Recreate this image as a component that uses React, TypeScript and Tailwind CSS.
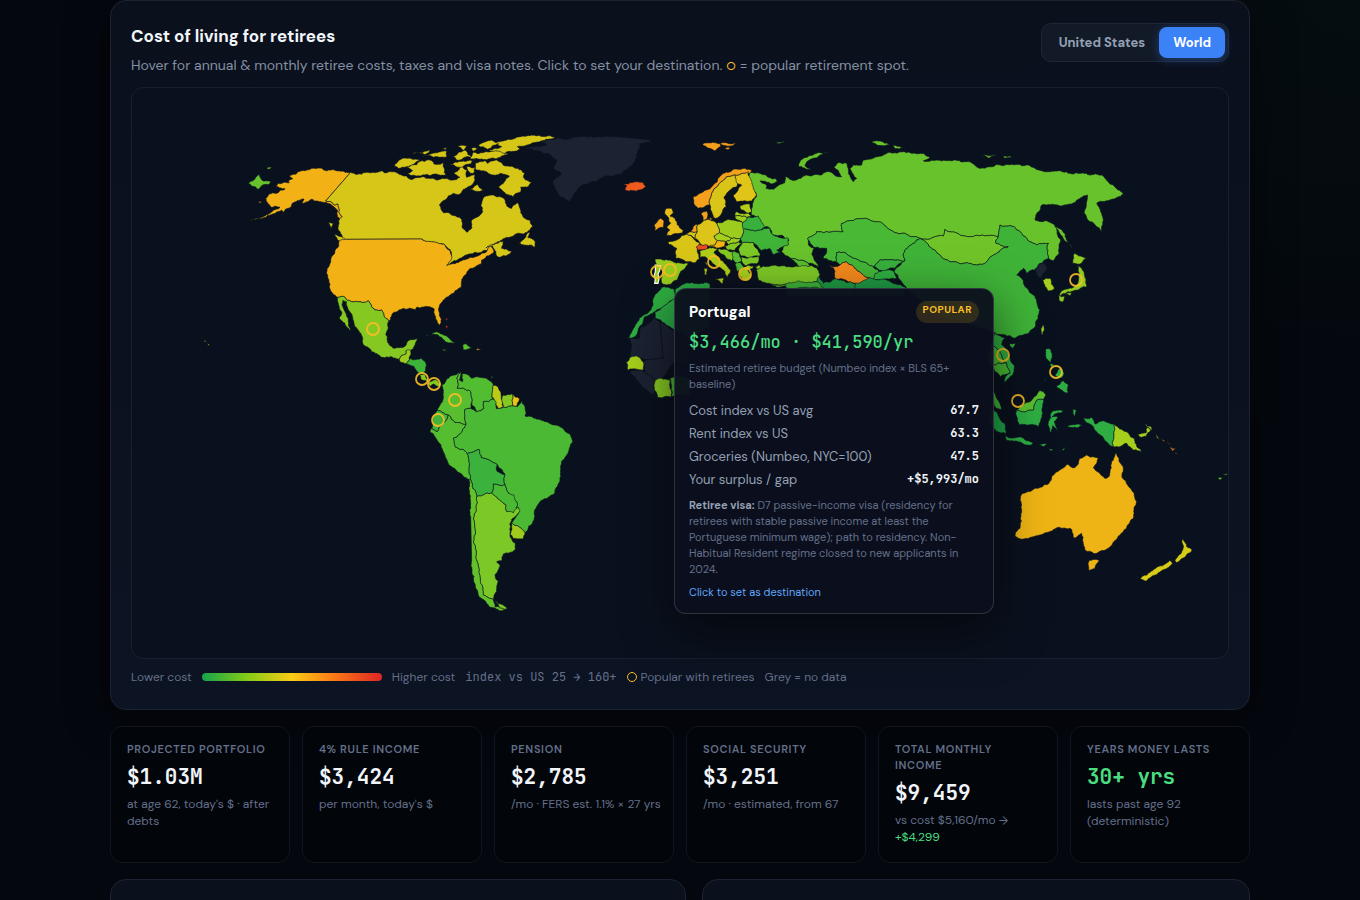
type Land = [fill: string, d: string];

type Region = {
  x: number;
  y: number;
  lands: Land[];
};

const NO_DATA = "#1b2232";

// Outlines are stored at three units per map pixel, relative to the region's origin.
const regions: Region[] = [
  {
    x: 98,
    y: 32,
    lands: [
      ["#f2b215", "175,182 188,176 178,168 195,163 205,155 225,152 240,148 275,144 282,150 300,150 330,153 362,157 287,243 305,246 312,255 323,251 330,282 337,290 330,298 322,290 322,270 305,255 287,247 262,243 245,238 215,250 222,237 190,248 182,262 160,276 155,270 120,285 58,301 110,284 150,262 125,262 113,250 107,235 118,222 140,220 165,206 138,200 145,190 178,188"],
      ["#d6c617", "362,157 375,162 395,163 400,158 430,157 455,152 470,158 500,158 530,168 540,178 580,170 615,178 650,175 668,180 690,172 672,160 695,138 712,150 710,172 735,165 735,180 725,195 700,208 690,222 670,220 645,240 628,255 640,278 680,290 695,298 698,325 712,337 725,325 725,300 750,285 758,275 752,255 768,228 790,225 825,240 830,258 845,265 862,248 872,278 880,292 900,300 908,318 900,330 880,342 830,352 800,368 768,384 800,370 820,363 815,385 845,395 852,393 810,412 800,408 798,395 788,378 770,392 750,398 720,402 690,415 668,425 650,437 665,405 660,388 640,372 600,365 575,357 348,358 340,360 325,320 330,295 337,290 330,282 323,251 312,255 305,246 287,243"],
      ["#d6c617", "868,370 900,336 893,352 915,363 914,382 905,375 880,374"],
      ["#d6c617", "313,342 335,350 348,362 345,374 322,358"],
      ["#d6c617", "296,307 310,310 303,326"],
      ["#d6c617", "737,128 765,122 772,130 800,120 826,138 862,145 884,160 880,172 905,186 890,202 872,202 872,216 850,230 826,220 806,200 822,187 838,168 812,160 785,164 760,152 738,150"],
      ["#d6c617", "786,68 830,60 870,50 900,47 975,51 905,70 862,80 870,86 840,94 820,102 776,92 815,80"],
      ["#d6c617", "744,77 785,60 806,72 772,88"],
      ["#d6c617", "533,160 548,152 528,142 560,134 565,126 600,120 612,132 640,128 647,166 618,162 600,167 560,168"],
      ["#d6c617", "493,138 520,114 570,120 535,140 505,145"],
      ["#d6c617", "548,101 600,90 588,103"],
      ["#d6c617", "576,107 650,94 650,111 610,112"],
      ["#d6c617", "683,79 713,76 700,91"],
      ["#d6c617", "670,108 688,96 706,90 724,112 680,120"],
      ["#d6c617", "728,98 790,94 834,102 800,116 720,116"],
      ["#d6c617", "660,134 690,124 740,116 722,132 690,142"],
      ["#d6c617", "710,140 736,142 732,158 722,160"],
      ["#d6c617", "724,84 744,86 730,94"],
      ["#d6c617", "716,209 732,200 742,192 760,213 735,214"],
      ["#d6c617", "636,84 653,80 645,89"],
      ["#68c22b", "55,190 72,180 88,163 98,182 122,185 115,194 95,197 85,208 75,200"],
      ["#68c22b", "110,146 125,141 120,147"],
      ["#f2b215", "84,246 96,244 92,250"],
    ],
  },
  {
    x: 168,
    y: 142,
    lands: [
      ["#f2b215", "118,31 135,28 365,27 400,36 430,42 450,62 455,78 440,106 470,98 510,82 545,70 560,65 572,48 582,66 560,78 545,90 543,103 512,115 500,130 490,140 484,172 460,190 430,210 418,230 424,268 418,286 408,268 402,236 385,230 350,232 345,240 310,235 280,248 266,275 255,262 245,240 225,240 205,212 155,215 135,202 112,202 92,183 84,145 82,115 100,75 115,50"],
      ["#86c822", "112,202 135,202 155,215 205,212 225,240 245,240 255,262 266,275 258,310 262,335 280,355 310,352 325,332 352,325 345,345 330,362 318,362 318,372 303,378 298,390 275,380 245,382 215,365 190,345 188,325 165,290 150,245 140,215 128,212 130,235 145,270 153,305 135,280 118,262 125,245"],
      ["#9ccd1e", "318,362 333,360 330,378 320,402 300,395 298,390 303,378 318,372"],
      ["#3db33a", "330,385 365,385 376,395 372,430 355,430 340,408 320,402"],
      ["#86c822", "355,432 372,432 385,455 365,450"],
      ["#86c822", "385,458 410,450 425,462 415,470 400,462 390,470"],
      ["#5abf2e", "377,318 410,305 440,318 466,338 440,337 425,322 400,312"],
      ["#5abf2e", "488,345 500,342 517,355 490,359"],
      ["#86c822", "427,357 443,359 432,363"],
      ["#e09a1c", "529,356 543,358 530,361"],
      ["#d83a22", "437,285 444,290 439,298"],
      ["#d83a22", "434,266 444,266 440,271"],
      ["#f2b215", "-278,340 -271,343 -276,348"],
      ["#f2b215", "-288,330 -280,334 -285,336"],
    ],
  },
  {
    x: 248,
    y: 242,
    lands: [
      ["#58be2f", "185,165 200,148 225,135 242,124 230,145 232,175 270,182 277,210 272,235 255,238 258,285 240,278 225,278 205,255 172,240 188,215 190,180"],
      ["#52bd31", "242,124 238,150 248,155 246,132 265,135 275,145 320,145 340,165 335,200 342,208 310,215 312,235 290,245 275,225 277,210 270,182 232,175 230,145"],
      ["#bccc16", "340,165 352,168 362,185 368,215 370,232 355,238 345,215 335,200"],
      ["#86c822", "370,195 398,192 400,228 370,232 366,212"],
      ["#e8c515", "398,192 418,205 410,230 400,228"],
      ["#58be2f", "333,140 339,140 336,146"],
      ["#3eb43a", "172,240 205,255 195,275 178,290 172,305 155,295 160,260"],
      ["#55bd30", "205,255 225,278 240,278 258,285 248,298 220,325 225,350 250,358 262,372 268,410 272,450 265,448 215,410 190,365 150,305 155,295 172,305 178,290 195,275"],
      ["#4cb934", "272,235 290,245 312,235 310,215 342,208 348,235 370,232 400,228 412,230 425,212 437,245 435,258 465,265 500,275 540,290 570,312 578,335 560,375 543,405 540,450 525,490 480,515 468,535 462,570 435,608 395,578 418,545 410,515 385,490 375,465 375,435 350,402 303,382 297,358 262,372 250,358 225,350 220,325 248,298 258,285 255,238"],
      ["#3bb23c", "262,372 297,358 303,382 350,402 352,425 375,435 375,465 340,462 335,490 318,490 290,500 272,450 268,410"],
      ["#4cb934", "340,462 375,465 385,490 402,495 412,520 410,545 380,545 378,525 335,490"],
      ["#9fcc1c", "395,578 435,608 428,627 400,625 390,612"],
      ["#7cc826", "290,500 318,490 335,490 378,525 380,545 400,548 416,532 420,542 390,580 390,618 405,640 405,660 370,672 365,692 350,695 360,705 345,735 355,755 350,785 340,808 310,795 300,740 290,690 285,600 282,560"],
      ["#65c12b", "265,448 272,450 290,500 282,560 285,600 290,690 300,740 310,795 340,808 345,830 375,838 360,843 330,832 295,795 282,740 275,690 272,560 268,490"],
      ["#7cc826", "345,812 386,838 358,834"],
      [NO_DATA, "415,805 424,803 420,808"],
    ],
  },
  {
    x: 608,
    y: 42,
    lands: [
      ["#68c22b", "28,130 60,130 105,145 112,155 95,162 60,153 80,165 78,175 100,178 112,168 135,158 135,140 155,150 190,138 245,135 260,125 305,140 282,112 295,98 320,100 325,130 340,155 350,145 330,115 340,105 365,105 370,90 410,80 440,70 480,65 550,70 570,82 550,92 620,92 680,95 720,115 750,110 770,103 830,103 880,112 925,125 1010,128 1085,135 1125,172 1150,192 1115,208 1070,220 1088,260 1085,305 1050,275 1032,250 1040,215 1042,195 1020,205 990,222 905,225 885,270 925,275 945,285 962,330 958,370 940,392 925,385 925,340 890,345 860,325 820,290 780,285 775,320 700,320 615,298 610,318 540,325 460,305 425,278 375,265 305,280 310,305 230,305 203,325 205,345 222,355 215,372 235,410 205,400 150,385 125,365 130,350 147,330 130,318 95,310 90,295 70,290 55,262 35,255 35,235 40,215 50,195 35,165 25,140"],
      ["#68c22b", "175,108 190,85 230,70 267,67 205,92 195,108 212,118"],
      ["#68c22b", "393,38 415,33 452,46 410,45"],
      ["#68c22b", "458,47 490,52 465,56"],
      ["#68c22b", "723,74 777,75 745,84"],
      ["#68c22b", "790,79 816,80 795,85"],
      ["#68c22b", "108,37 134,35 118,41"],
      ["#68c22b", "943,282 967,300 995,350 998,358 968,320"],
      ["#49b935", "203,325 230,305 310,305 305,280 375,265 425,278 460,305 540,325 505,350 490,372 495,392 420,390 400,410 355,390 320,372 290,368 288,395 250,385 260,355 222,352"],
      ["#44b638", "288,395 290,368 320,372 355,390 400,410 430,430 400,450 390,445 350,420 320,396 300,405"],
      ["#f58a1c", "268,405 285,410 300,405 320,396 350,420 390,445 370,473 345,460 285,445 285,425"],
      ["#38b13c", "400,410 420,390 495,392 465,415 430,425"],
      ["#2fae40", "405,430 440,420 462,425 470,445 430,450 400,446"],
      ["#58be2f", "150,385 205,400 225,430 205,430 170,400"],
      ["#1f9a44", "200,430 235,435 250,460 290,447 345,460 370,473 370,500 140,500 135,462 190,455"],
      ["#1f9a44", "345,460 400,446 440,450 500,475 490,500 345,500"],
      ["#70c429", "540,325 610,318 615,298 700,320 775,320 768,340 805,350 760,375 740,395 710,405 630,395 575,355"],
      ["#3fb338", "540,325 575,355 630,395 710,405 740,395 760,375 805,350 768,340 775,320 780,285 820,290 860,325 890,345 925,340 925,385 900,400 885,420 860,430 850,415 830,435 850,452 855,470 885,500 900,540 885,590 860,612 825,625 795,615 760,605 600,560 500,475 462,425 495,392 490,372 505,350"],
      [NO_DATA, "885,420 900,400 915,402 920,420 905,445 890,435"],
      ["#a5cf1c", "908,450 930,445 943,475 925,483 915,470"],
      ["#8fcb20", "1002,370 1040,385 1020,402 998,400"],
      ["#8fcb20", "1013,408 1032,425 1040,470 1015,480 985,485 958,500 962,487 1000,472 1015,450"],
      ["#8fcb20", "956,496 975,500 970,516 958,512"],
      ["#8fcb20", "978,492 997,486 990,497"],
    ],
  },
  {
    x: 488,
    y: 42,
    lands: [
      ["#f05a1c", "8,160 25,162 45,155 70,157 78,170 60,180 38,182 15,178 20,168"],
      ["#f5a01a", "248,43 300,40 303,48 285,63 270,55"],
      ["#f5a01a", "301,40 347,38 340,46 305,44"],
      ["#f5a01a", "314,54 331,54 325,60"],
      ["#f5a01a", "220,200 250,185 280,165 310,130 345,117 375,115 395,122 388,130 370,130 345,135 320,140 295,165 275,190 270,225 235,235 222,222"],
      ["#d8c518", "270,225 275,190 295,165 320,140 345,135 350,150 350,170 330,180 312,205 318,230 305,250 292,265 280,262 272,240"],
      ["#e0c417", "345,135 370,130 385,125 390,145 400,170 410,195 395,213 350,215 340,195 365,165 352,160"],
      ["#b4cc18", "360,228 390,222 395,245 385,250 365,240"],
      ["#a5cf1c", "348,245 385,250 395,258 380,262 345,258"],
      ["#9ccd1e", "345,258 380,262 382,274 368,278 348,268"],
      ["#f5a01a", "243,252 260,243 262,265 250,272"],
      ["#f5a01a", "268,262 279,265 270,273"],
      ["#e8bd18", "137,237 155,235 160,250 150,258 165,265 172,285 190,300 185,310 160,312 140,317 150,300 140,290 152,280 145,262 135,252"],
      ["#f2a51a", "103,286 122,265 132,272 130,292 105,302"],
      ["#d8c518", "143,338 170,330 200,312 225,330 240,340 232,365 238,385 225,398 200,395 168,385 170,355"],
      ["#d8c518", "200,312 212,305 232,305 225,326"],
      ["#f2a51a", "212,305 220,290 235,283 232,305"],
      ["#dcc418", "235,283 250,272 262,268 290,280 298,308 282,318 292,332 285,345 245,348 240,340 225,326 232,305"],
      ["#ee4a22", "228,352 240,343 262,345 262,356 235,361"],
      ["#f5b312", "262,348 285,345 292,332 318,335 315,350 290,355"],
      ["#9ccd1e", "290,280 340,270 368,278 370,310 362,326 335,325 298,308"],
      ["#a5cf1c", "282,318 298,308 335,325 318,335 292,332"],
      ["#9ccd1e", "318,335 335,325 362,326 355,336 325,344"],
      ["#86c822", "315,348 325,344 355,336 365,340 345,362 320,358"],
      ["#b0cd18", "238,364 262,356 292,355 282,366 300,390 332,420 322,442 315,425 295,410 270,390 255,380 240,382"],
      ["#b0cd18", "286,447 311,444 308,461"],
      ["#b0cd18", "252,415 262,415 260,434 253,434"],
      ["#c0cc18", "254,395 261,398 258,411"],
      ["#86c822", "292,358 318,358 345,366 335,392 315,378 300,368"],
      ["#58be2f", "340,364 358,370 365,395 352,402 338,388"],
      ["#49b935", "345,402 362,398 372,412 352,424"],
      ["#7cc826", "355,360 365,340 400,338 415,362 420,378 385,384 362,378"],
      ["#7cc826", "362,380 385,384 418,378 410,402 375,408 366,396"],
      ["#a5cf1c", "355,424 375,410 402,408 398,416 384,420 395,436 385,452 368,450"],
      ["#38b13c", "370,298 368,278 385,260 415,258 435,290 425,300"],
      ["#3fb338", "362,326 370,310 370,298 425,300 450,295 460,315 505,325 505,345 470,360 480,368 462,374 450,356 425,362 410,345 400,338 365,340"],
      ["#98cc1e", "105,388 150,390 205,400 195,415 178,432 172,450 140,465 125,458 126,412 108,405"],
      ["#7cc826", "408,420 430,408 465,405 510,410 560,408 590,412 600,435 590,455 520,462 475,465 440,460 415,450"],
      ["#86c822", "404,410 418,404 424,412 412,418"],
      ["#58be2f", "455,462 500,462 496,468 460,468"],
      ["#3fb338", "495,463 545,456 590,455 610,475 500,475"],
    ],
  },
  {
    x: 388,
    y: 37,
    lands: [
      [NO_DATA, "15,70 80,62 60,50 110,40 200,36 280,34 395,45 360,55 350,90 340,115 320,135 290,148 240,160 205,175 180,185 160,210 150,230 120,215 103,190 100,165 125,145 100,130 110,105 90,90"],
      ["#2fae40", "425,487 462,492 465,520 430,545 405,560 375,575 365,600 345,635 325,640 340,610 370,570 392,555 400,520"],
      ["#2ba845", "465,495 475,488 500,474 558,472 570,478 570,600 510,640 462,617 405,578 405,560 465,520"],
      [NO_DATA, "330,640 358,640 365,605 405,578 420,590 430,700 375,705 350,692 330,700"],
      [NO_DATA, "420,590 462,617 510,640 510,720 462,712 440,745 425,765 405,765 375,740 370,712 375,705 430,700"],
      ["#a5cf1c", "318,712 330,697 350,692 370,712 370,735 325,735"],
      [NO_DATA, "330,737 375,740 405,765 405,815 385,800 360,775 345,755"],
      ["#86c822", "405,765 425,760 450,765 455,815 412,818 403,795"],
      ["#49b935", "450,760 470,752 510,760 510,810 455,815"],
    ],
  },
  {
    x: 848,
    y: 142,
    lands: [
      ["#8fcb20", "183,295 192,285 193,300 187,315"],
      ["#3fb338", "88,342 106,340 100,357"],
      ["#2eae42", "42,305 75,325 65,345 85,370 102,405 100,430 70,458 75,440 90,430 80,400 55,360 30,345"],
      ["#49b935", "30,345 55,360 80,400 30,405"],
      ["#49b935", "30,405 80,400 90,430 60,440 45,425"],
      ["#3fb338", "35,485 45,490 60,520 62,540 42,525"],
      ["#1fa548", "30,535 42,542 75,580 78,612 60,608 30,585"],
      ["#2eae42", "76,617 100,624 125,622 160,638 150,646 95,632 80,630"],
      ["#2eae42", "175,645 201,643 190,651"],
      ["#2eae42", "203,654 220,658 212,663"],
      ["#2eae42", "237,663 257,649 250,661"],
      ["#2eae42", "108,540 125,545 160,540 170,510 190,508 188,550 175,590 120,585 110,560"],
      ["#5abf2e", "108,540 130,525 155,510 180,480 198,495 190,508 170,510 160,540 125,545"],
      ["#2eae42", "205,575 215,545 257,542 225,552 215,562 234,562 222,575 235,607 218,587 210,612"],
      ["#2eae42", "278,538 289,540 284,560"],
      ["#2eae42", "262,588 308,585 290,593"],
      ["#2eae42", "197,358 213,358 215,385 210,398 198,385"],
      ["#2eae42", "206,403 224,403 216,413"],
      ["#2eae42", "240,415 253,430 246,443 225,436"],
      ["#2eae42", "228,470 250,452 265,465 262,490 245,480"],
      ["#2eae42", "183,461 201,437 198,447"],
      ["#2eae42", "310,565 335,562 345,582 370,572 402,583 400,650 375,632 350,605 340,590 320,578"],
      ["#a5cf1c", "402,583 440,605 462,625 470,650 485,665 460,660 440,640 420,650 400,650"],
      ["#a5cf1c", "471,612 498,609 504,590 513,600 500,619 480,621"],
      ["#a5cf1c", "494,581 512,589 515,601 508,594"],
      ["#a5cf1c", "527,609 539,626 532,625"],
      ["#c07a20", "545,626 557,634 548,633"],
      ["#c07a20", "561,633 573,643 564,641"],
      ["#c07a20", "569,651 587,656 578,663"],
      ["#c07a20", "585,665 593,673 586,671"],
      ["#68c22b", "714,741 729,741 718,750"],
      ["#68c22b", "729,735 743,728 738,736"],
      [NO_DATA, "592,775 606,790 600,788"],
      ["#eeb415", "120,810 128,790 165,775 205,762 225,730 262,703 285,713 300,685 320,675 330,682 355,685 340,712 375,745 388,738 400,690 408,668 425,705 428,745 455,780 468,825 460,865 430,905 390,950 350,970 315,960 305,910 285,925 270,895 235,892 180,915 125,928 105,918 120,895"],
      ["#eeb415", "327,991 358,991 345,1016 326,1021"],
      ["#d6cc17", "607,923 620,950 636,960 615,982 590,999 585,992 605,965"],
      ["#d6cc17", "480,1046 520,1020 570,990 577,1000 540,1026 500,1053"],
    ],
  },
];

const popularSpots = [
  [241, 241], [290, 291], [302, 296], [323, 312], [306, 332], [525, 184], [538, 182],
  [582, 174], [613, 186], [871, 267], [924, 284], [886, 313], [944, 192],
];

// Splits an edge with a small repeatable offset, so neighbours share the same border.
function roughen(a: number[], b: number[], depth: number): number[][] {
  const dx = b[0] - a[0];
  const dy = b[1] - a[1];
  const len = Math.hypot(dx, dy);
  if (depth === 0 || len < 6 || len > 110) return [b];
  const flip = a[0] > b[0] || (a[0] === b[0] && a[1] > b[1]) ? -1 : 1;
  const seed = Math.sin((a[0] + b[0]) * 12.9898 + (a[1] + b[1]) * 78.233) * 43758.5453;
  const shift = (seed - Math.floor(seed) - 0.5) * Math.min(len * 0.3, 7) * flip;
  const mid = [(a[0] + b[0]) / 2 - (dy / len) * shift, (a[1] + b[1]) / 2 + (dx / len) * shift];
  return [...roughen(a, mid, depth - 1), ...roughen(mid, b, depth - 1)];
}

function outline(d: string) {
  const points = d.split(" ").map((p) => p.split(",").map(Number));
  const out = points.flatMap((p, i) => roughen(p, points[(i + 1) % points.length], 4));
  return "M" + out.map((p) => `${p[0].toFixed(1)},${p[1].toFixed(1)}`).join("L") + "Z";
}

function WorldMap() {
  return (
    <svg viewBox="0 0 1096 570" className="block w-full" role="img" aria-label="World cost of living map">
      {regions.map((region, i) => (
        <g key={i} transform={`translate(${region.x} ${region.y}) scale(0.33333)`}>
          {region.lands.map(([fill, d], j) => (
            <path key={j} d={outline(d)} fill={fill} stroke="#0a1220" strokeWidth="1.8" strokeLinejoin="round" />
          ))}
        </g>
      ))}
      <g transform="translate(488 42) scale(0.33333)">
        <path
          d="M106,405L122,408L119,422L114,432L117,446L114,460L104,460L106,446L102,440L106,425Z"
          fill="#98cc1e"
          stroke="#ffffff"
          strokeWidth="3.5"
        />
      </g>
      <g fill="none" stroke="#fbbf24" strokeOpacity="0.9" strokeWidth="1.8">
        {popularSpots.map(([x, y]) => (
          <circle key={`${x}-${y}`} cx={x} cy={y} r="6" />
        ))}
      </g>
    </svg>
  );
}

const tooltipRows = [
  ["Cost index vs US avg", "67.7"],
  ["Rent index vs US", "63.3"],
  ["Groceries (Numbeo, NYC=100)", "47.5"],
  ["Your surplus / gap", "+$5,993/mo"],
];

function Tooltip() {
  return (
    <div className="absolute left-[542px] top-[200px] w-80 rounded-xl border border-white/15 bg-[#0b101d]/97 px-3.5 pb-[13px] pt-3 text-[11px] leading-4 text-[#64708a] shadow-[0_16px_50px_rgba(0,0,0,0.6)]">
      <div className="flex items-start justify-between">
        <h3 className="text-[15px] font-bold leading-[22px] text-white">Portugal</h3>
        <span className="h-[22px] rounded-full bg-[#fbbf24]/15 px-[7px] text-[10px] font-bold leading-[18px] tracking-wider text-[#fbbf24]">
          POPULAR
        </span>
      </div>
      <p className="mt-[7px] font-['JetBrains_Mono','DejaVu_Sans_Mono',monospace] text-[17px] font-medium leading-6 text-[#4ade80]">
        $3,466/mo · $41,590/yr
      </p>
      <p className="mt-1.5">Estimated retiree budget (Numbeo index × BLS 65+ baseline)</p>
      <dl className="mt-[7px]">
        {tooltipRows.map(([label, value]) => (
          <div key={label} className="flex justify-between">
            <dt className="text-[13px] leading-[23px] text-[#94a0b4]">{label}</dt>
            <dd className="font-['JetBrains_Mono','Liberation_Mono',monospace] text-xs font-semibold leading-[23px] text-[#f1f5f9]">
              {value}
            </dd>
          </div>
        ))}
      </dl>
      <p className="mt-1.5">
        <strong className="text-[#94a0b4]">Retiree visa:</strong> D7 passive-income visa (residency for retirees with
        stable passive income at least the Portuguese minimum wage); path to residency. Non-Habitual Resident regime
        closed to new applicants in 2024.
      </p>
      <p className="mt-[7px] text-[#60a5fa]">Click to set as destination</p>
    </div>
  );
}

const stats = [
  { label: "Projected portfolio", value: "$1.03M", note: "at age 62, today's $ · after debts" },
  { label: "4% rule income", value: "$3,424", note: "per month, today's $" },
  { label: "Pension", value: "$2,785", note: "/mo · FERS est. 1.1% × 27 yrs" },
  { label: "Social Security", value: "$3,251", note: "/mo · estimated, from 67" },
  { label: "Total monthly income", value: "$9,459", note: "vs cost $5,160/mo → ", gain: "+$4,299" },
  { label: "Years money lasts", value: "30+ yrs", note: "lasts past age 92 (deterministic)", good: true },
];

export default function App() {
  return (
    <div className="h-screen overflow-hidden bg-[#04070e] bg-[radial-gradient(ellipse_at_100%_0%,#050d10_0%,#04070e_35%)] font-['DM_Sans',Inter,sans-serif] text-[#e8edf5]">
      <main className="mx-auto max-w-[1140px]">
        <section className="rounded-2xl border border-[#1c2433] bg-linear-to-b from-[#0a101c] to-[#0c1322] px-5 pb-[23px] pt-5 shadow-[0_8px_40px_rgba(0,0,0,0.5)]">
          <div className="flex items-start justify-between">
            <div>
              <h2 className="text-[17px] font-bold leading-[30px] text-[#f1f5f9]">Cost of living for retirees</h2>
              <p className="mt-1 text-sm leading-5 text-[#8490a4]">
                Hover for annual & monthly retiree costs, taxes and visa notes. Click to set your destination.{" "}
                <span className="text-[11px] leading-none text-[#fbbf24]">○</span> = popular retirement spot.
              </p>
            </div>
            <div className="mt-0.5 flex shrink-0 rounded-[10px] border border-[#1e2736] bg-[#121a28] p-[3px] text-[13px] font-bold">
              <button className="h-[31px] rounded-lg px-3.5 text-[#94a0b4]">United States</button>
              <button className="h-[31px] rounded-lg bg-[#3b82f6] px-3.5 text-white shadow-[0_2px_10px_rgba(59,130,246,0.35)]">
                World
              </button>
            </div>
          </div>
          <div className="relative mt-3 rounded-xl border border-[#182030] bg-[#0a111e]">
            <WorldMap />
            <Tooltip />
          </div>
          <div className="mt-[9px] flex items-center gap-2.5 text-xs leading-[18px] text-[#64708a]">
            <span>Lower cost</span>
            <span className="h-2 w-[180px] rounded bg-[linear-gradient(90deg,#16a34a,#84cc16,#facc15,#f97316,#dc2626)]" />
            <span>Higher cost</span>
            <span className="font-['JetBrains_Mono','Liberation_Mono',monospace] text-xs leading-[18px]">
              index vs US 25 → 160+
            </span>
            <span className="flex items-center gap-1">
              <span className="size-2.5 rounded-full border border-[#fbbf24]" />
              Popular with retirees
            </span>
            <span>Grey = no data</span>
          </div>
        </section>

        <section className="mt-4 grid grid-cols-6 gap-3">
          {stats.map((stat) => (
            <div key={stat.label} className="rounded-xl border border-[#10151e] bg-[#02050a] px-4 pb-4 pt-3.5">
              <h3 className="text-[11px] font-semibold uppercase leading-4 tracking-[0.06em] text-[#64708a]">
                {stat.label}
              </h3>
              <p
                className={`mt-1.5 font-['JetBrains_Mono','DejaVu_Sans_Mono',monospace] text-[21px] font-semibold leading-7 ${
                  stat.good ? "text-[#4ade80]" : "text-[#f1f5f9]"
                }`}
              >
                {stat.value}
              </p>
              <p className="-mr-1 mt-[5px] text-xs leading-[17px] text-[#64708a]">
                {stat.note}
                {stat.gain && <span className="text-[#4ade80]">{stat.gain}</span>}
              </p>
            </div>
          ))}
        </section>

        <section className="mt-4 grid grid-cols-[1.05fr_1fr] gap-4">
          <div className="h-40 rounded-2xl border border-[#1c2433] bg-[#0a101c]" />
          <div className="h-40 rounded-2xl border border-[#1c2433] bg-[#0a101c]" />
        </section>
      </main>
    </div>
  );
}
